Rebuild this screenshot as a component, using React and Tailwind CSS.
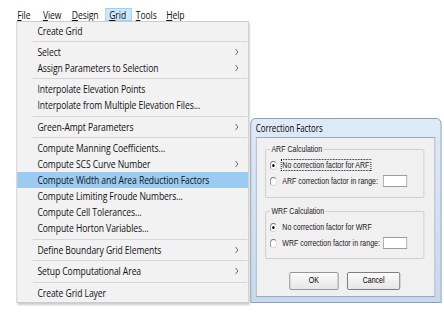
import React from 'react'

const menu = [
  { label: 'Create Grid' },
  { sep: 5 },
  { label: 'Select', arrow: true },
  { label: 'Assign Parameters to Selection', arrow: true },
  { sep: 5 },
  { label: 'Interpolate Elevation Points' },
  { label: 'Interpolate from Multiple Elevation Files...' },
  { sep: 6 },
  { label: 'Green-Ampt Parameters', arrow: true },
  { sep: 5 },
  { label: 'Compute Manning Coefficients...' },
  { label: 'Compute SCS Curve Number', arrow: true },
  { label: 'Compute Width and Area Reduction Factors', active: true },
  { label: 'Compute Limiting Froude Numbers...' },
  { label: 'Compute Cell Tolerances...' },
  { label: 'Compute Horton Variables...' },
  { sep: 6 },
  { label: 'Define Boundary Grid Elements', arrow: true },
  { sep: 5 },
  { label: 'Setup Computational Area', arrow: true },
  { sep: 6 },
  { label: 'Create Grid Layer' },
]

const bar = [
  { u: 'F', rest: 'ile', w: 'w-[33px]' },
  { u: 'V', rest: 'iew', w: 'w-[37px]' },
  { u: 'D', rest: 'esign', w: 'w-[48px]' },
  { u: 'G', rest: 'rid', w: 'w-[34px]', open: true },
  { u: 'T', rest: 'ools', w: 'w-[39px]' },
  { u: 'H', rest: 'elp', w: 'w-[32px]' },
]

function Chevron() {
  return (
    <svg width="5" height="8" viewBox="0 0 5 8" className="shrink-0">
      <path d="M1 1l3 3-3 3" stroke="#5a5a5a" strokeWidth="1" fill="none" />
    </svg>
  )
}

function Radio({ checked }) {
  return (
    <span className="w-[9px] h-[9px] rounded-full border border-t-[#7a7a7a] border-l-[#7a7a7a] border-b-[#d8d8d8] border-r-[#d8d8d8] bg-white flex items-center justify-center shrink-0">
      {checked && <span className="w-[3px] h-[3px] rounded-full bg-black" />}
    </span>
  )
}

function Option({ checked, focus, label, input }) {
  return (
    <div className="h-[16px] flex items-center pl-[5px]">
      <Radio checked={checked} />
      <span className={`ml-[5px] px-[1px] leading-[10px] border ${focus ? 'border-dotted border-black' : 'border-transparent'}`}>
        {label}
      </span>
      {input && <span className="ml-auto mr-[21px] w-[31px] h-[12px] bg-white border border-[#9c9c9c]" />}
    </div>
  )
}

function Group({ title, name, className }) {
  return (
    <fieldset className={`ml-[11px] w-[204px] border border-[#cacaca] rounded-[2px] pt-[3px] ${className}`}>
      <legend className="ml-[5px] px-[2px] leading-[10px] text-[#1a1a1a]">{title}</legend>
      <Option checked focus={name === 'ARF'} label={`No correction factor for ${name}`} />
      <Option label={`${name} correction factor in range:`} input />
    </fieldset>
  )
}

export default function App() {
  return (
    <div className="w-[444px] h-[312px] overflow-hidden bg-white">
      <div className="w-[570px] h-[312px] origin-top-left scale-x-[0.78] font-['Open_Sans',sans-serif] text-[11px] tracking-[-0.1px] text-[#111]">
        {/* menu bar */}
        <div className="pt-[8px] pl-[17px] flex">
          {bar.map((b) => (
            <div
              key={b.u}
              className={`${b.w} h-[13px] leading-[12px] px-[4px] border ${b.open ? 'bg-[#cce8ff] border-[#99d1ff]' : 'border-transparent'}`}
            >
              <span className="underline">{b.u}</span>{b.rest}
            </div>
          ))}
        </div>

        <div className="flex items-start">
          {/* dropdown */}
          <div className="ml-[21px] w-[298px] bg-[#f2f2f2] border border-[#cccccc] py-[1px] shadow-[2px_2px_2px_rgba(0,0,0,0.22)]">
            {menu.map((m, i) =>
              m.sep ? (
                <div key={i} className={`${m.sep === 5 ? 'h-[5px]' : 'h-[6px]'} flex items-center pl-[20px] pr-[1px]`}>
                  <div className="flex-1 h-px bg-[#d6d6d6]" />
                </div>
              ) : (
                <div
                  key={i}
                  className={`h-[16px] flex items-center pl-[26px] pr-[12px] ${m.active ? 'bg-[#9bcbf1]' : ''}`}
                >
                  <span className="flex-1 leading-[16px] whitespace-nowrap">{m.label}</span>
                  {m.arrow && <Chevron />}
                </div>
              )
            )}
          </div>

          {/* dialog */}
          <div className="ml-[2px] mt-[97px] w-[245px] rounded-t-[6px] border border-[#7f93ab] bg-gradient-to-b from-[#dfeaf7] to-[#c7d9ee] pl-[6px] pr-[7px] pb-[5px] tracking-normal">
            <div className="h-[18px] flex items-center text-[10px] text-black">Correction Factors</div>
            <div className="border border-[#9aabc0] bg-[#f0f0f0] pt-[6px] pb-[6px] font-['Liberation_Sans',Arial,sans-serif] text-[9px] text-[#1a1a1a]">
              <Group title="ARF Calculation" name="ARF" className="pb-[8px]" />
              <Group title="WRF Calculation" name="WRF" className="mt-[8px] pb-[7px]" />
              <div className="mt-[13px] ml-[42px] flex gap-[11px]">
                <button className="w-[63px] h-[18px] rounded-[2px] border border-[#8a8a8a] bg-gradient-to-b from-[#fbfbfb] to-[#e6e6e6] text-black">OK</button>
                <button className="w-[68px] h-[18px] rounded-[2px] border border-[#6f6f6f] bg-gradient-to-b from-[#fbfbfb] to-[#e6e6e6] text-black">Cancel</button>
              </div>
            </div>
          </div>
        </div>
      </div>
    </div>
  )
}
